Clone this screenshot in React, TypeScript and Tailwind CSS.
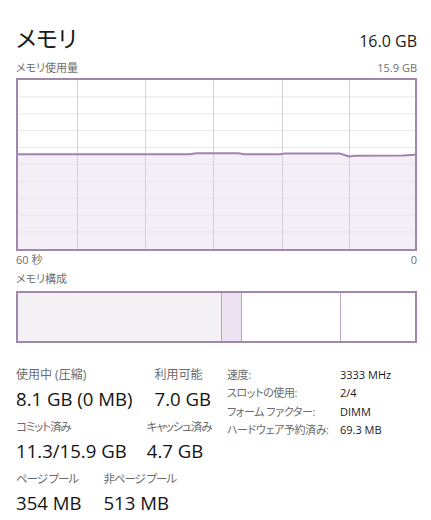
import React from 'react'

const font = "font-['Open_Sans','Noto_Sans_CJK_JP',sans-serif] [font-feature-settings:'palt']"

// memory usage trace, coordinates inside the graph's inner box (397 x 169)
const trace: [number, number][] = [
  [0, 74.3],
  [172, 74.3],
  [178, 73.3],
  [220, 73.3],
  [227, 74.3],
  [262, 74.3],
  [267, 73.5],
  [322, 73.5],
  [331, 76.5],
  [337, 75.7],
  [385, 75.5],
  [397, 74.7],
]

function UsageGraph() {
  const w = 397
  const h = 169
  const rows = Array.from({ length: 9 }, (_, i) => ((i + 1) * h) / 10)
  const cols = [59, 127, 195, 264, 331]
  const line = trace.map(([x, y]) => `${x},${y}`).join(' ')
  const area = `0,${h} ${line} ${w},${h}`

  return (
    <div className="border-2 border-[#a088ab] h-[173px] w-[401px]">
      <svg width={w} height={h} className="block">
        <polygon points={area} fill="#f4eef6" />
        {rows.map((y) => (
          <line key={y} x1={0} x2={w} y1={y} y2={y} stroke="#ebe4ee" strokeWidth={1} />
        ))}
        {cols.map((x) => (
          <line key={x} x1={x + 0.5} x2={x + 0.5} y1={0} y2={h} stroke="#d9cfdd" strokeWidth={1} />
        ))}
        <polyline points={line} fill="none" stroke="#a085ab" strokeWidth={2} />
      </svg>
    </div>
  )
}

function CompositionBar() {
  return (
    <div className="mt-[3px] flex h-[52px] w-[401px] border-2 border-[#a088ab]">
      <div className="w-[203px] bg-[#f3f1f4]" />
      <div className="w-px bg-[#b8a4be]" />
      <div className="w-[19px] bg-[#ede3f1]" />
      <div className="w-px bg-[#b8a4be]" />
      <div className="w-[98px] bg-white" />
      <div className="w-px bg-[#b8a4be]" />
      <div className="flex-1 bg-white" />
    </div>
  )
}

function Stat({ label, value, tight }: { label: string; value: string; tight?: boolean }) {
  return (
    <div className="flex flex-col">
      <span
        className={
          tight
            ? 'text-[11.5px] leading-[18px] tracking-[-1.1px] text-[#6b6b6b]'
            : 'text-[12px] leading-[18px] text-[#6b6b6b]'
        }
      >
        {label}
      </span>
      <span className="text-[18.6px] leading-[30px] text-[#141414]">{value}</span>
    </div>
  )
}

const details = [
  ['速度:', '3333 MHz'],
  ['スロットの使用:', '2/4'],
  ['フォーム ファクター:', 'DIMM'],
  ['ハードウェア予約済み:', '69.3 MB'],
]

export default function App() {
  return (
    <div className={`h-[520px] w-[431px] bg-white pl-4 pt-[22px] ${font}`}>
      <div className="flex w-[401px] items-baseline justify-between">
        <h1 className="text-[23px] leading-[32px] text-[#1a1a1a]">メモリ</h1>
        <span className="text-[16px] text-[#1a1a1a]">16.0 GB</span>
      </div>
      <div className="mt-[6px] flex w-[401px] justify-between text-[11px] leading-[16px] text-[#6e6e6e]">
        <span>メモリ使用量</span>
        <span>15.9 GB</span>
      </div>
      <div className="mt-[2px]">
        <UsageGraph />
      </div>
      <div className="flex w-[401px] justify-between text-[11px] leading-[18px] text-[#6e6e6e]">
        <span>60 秒</span>
        <span>0</span>
      </div>
      <div className="mt-px text-[11px] leading-[18px] text-[#6e6e6e]">メモリ構成</div>
      <CompositionBar />

      <div className="mt-[23px] flex">
        <div className="flex w-[211px] flex-col gap-[4px]">
          <div className="flex gap-[22px]">
            <Stat label="使用中 (圧縮)" value="8.1 GB (0 MB)" />
            <Stat label="利用可能" value="7.0 GB" />
          </div>
          <div className="flex gap-[20px]">
            <Stat label="コミット済み" value="11.3/15.9 GB" tight />
            <Stat label="キャッシュ済み" value="4.7 GB" tight />
          </div>
          <div className="flex gap-[22px]">
            <Stat label="ページ プール" value="354 MB" tight />
            <Stat label="非ページ プール" value="513 MB" tight />
          </div>
        </div>
        <div className="flex flex-col">
          {details.map(([k, v]) => (
            <div key={k} className="flex text-[11px] leading-[18.4px]">
              <span className="w-[113px] tracking-[-0.4px] text-[#6b6b6b]">{k}</span>
              <span className="text-[#1a1a1a]">{v}</span>
            </div>
          ))}
        </div>
      </div>
    </div>
  )
}
